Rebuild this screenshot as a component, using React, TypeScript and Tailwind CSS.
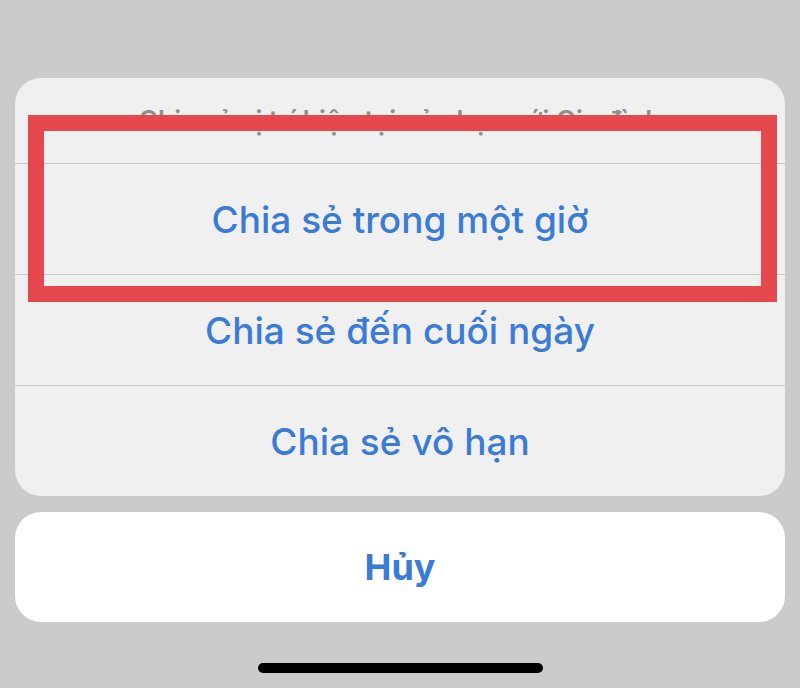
const options = ["Chia sẻ trong một giờ", "Chia sẻ đến cuối ngày", "Chia sẻ vô hạn"]

export default function App() {
  return (
    <div
      className="relative flex h-[688px] w-[800px] flex-col items-center overflow-hidden bg-[#cbcbcb] px-[15px] pt-[78px]"
      style={{ fontFamily: 'Inter, "Liberation Sans", Arial, sans-serif' }}
    >
      <div className="flex w-full flex-col overflow-hidden rounded-[26px] bg-[#f0f0f0]">
        <div className="flex h-[85px] items-start justify-center pt-[29px]">
          <span className="text-[26.5px] font-semibold leading-none text-[#8e8e8e]">
            Chia sẻ vị trí hiện tại của bạn với Gia đình
          </span>
        </div>
        {options.map((label) => (
          <button
            key={label}
            type="button"
            className="flex h-[111px] items-center justify-center border-t border-[#c8c8c8] text-[37px] font-medium leading-none text-[#3a7bd5]"
          >
            {label}
          </button>
        ))}
      </div>

      <button
        type="button"
        className="mt-[16px] flex h-[110px] w-full items-center justify-center rounded-[26px] bg-white text-[36px] font-bold leading-none text-[#3a7bd5]"
      >
        Hủy
      </button>

      <div className="mt-[41px] h-[10px] w-[285px] rounded-full bg-black" />

      {/* red highlight drawn over the first option */}
      <div className="pointer-events-none absolute left-[28px] top-[115px] h-[187px] w-[749px] border-[16px] border-[#e5484d]" />
    </div>
  )
}
